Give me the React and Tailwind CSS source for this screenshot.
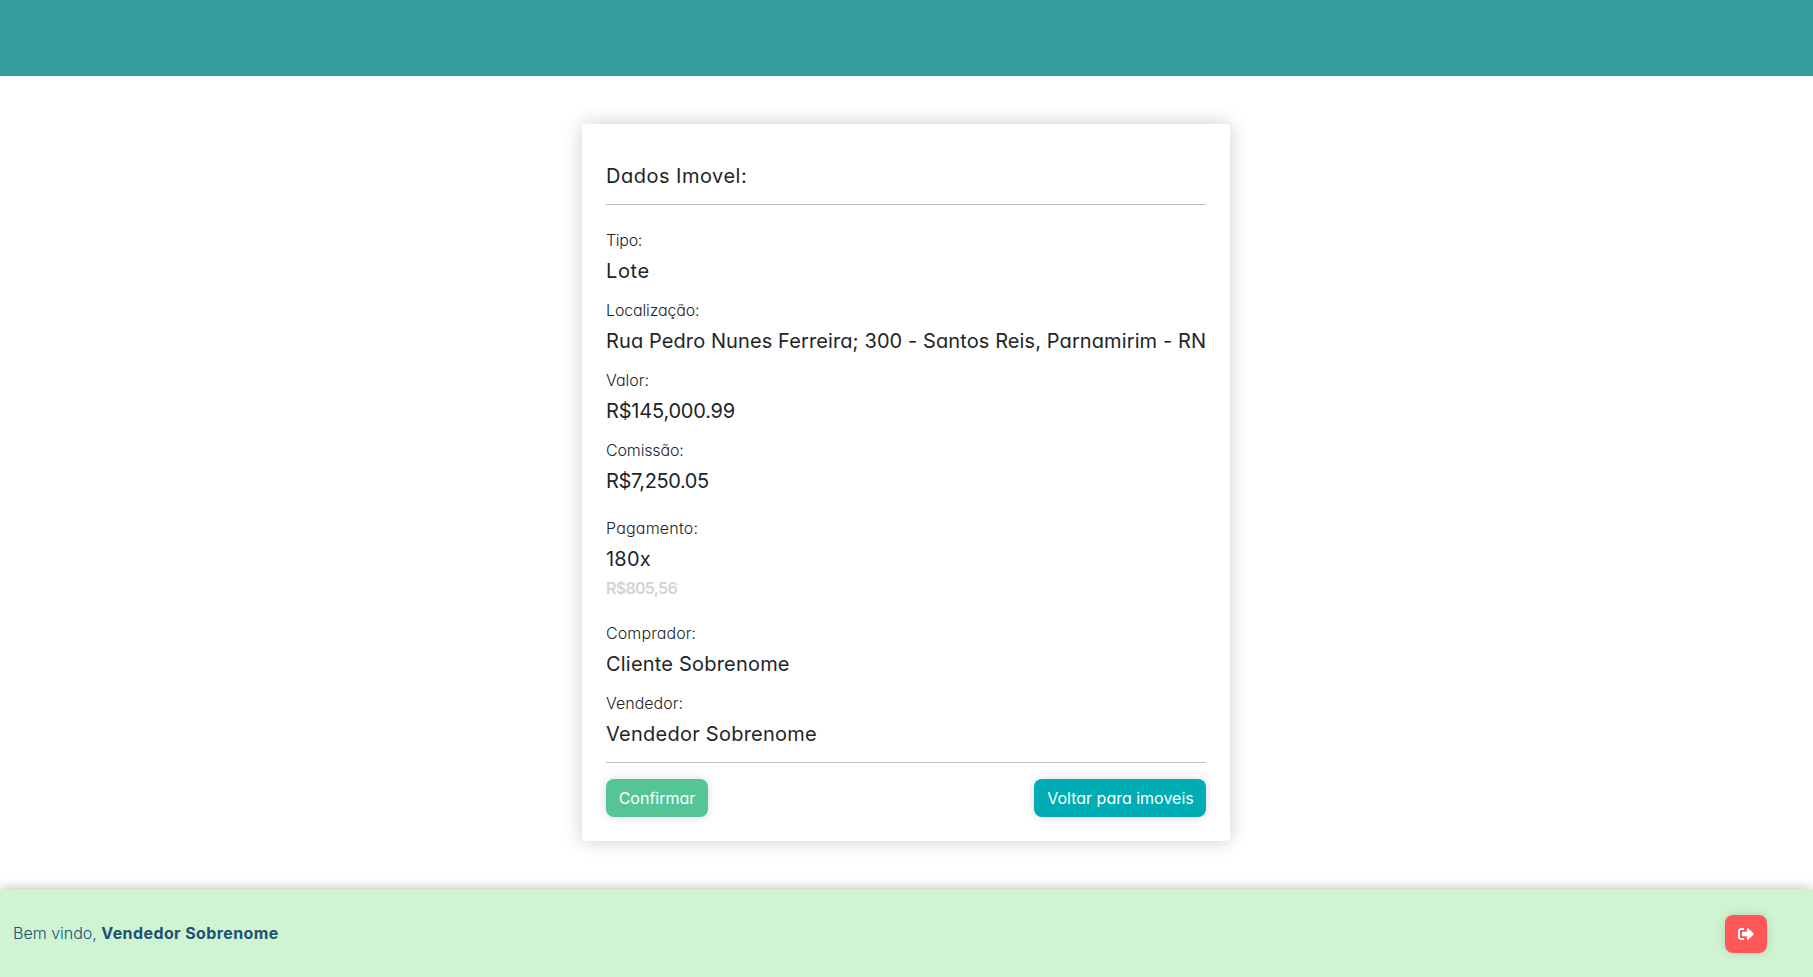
import { FaSignOutAlt } from 'react-icons/fa';

function Field({ label, value, labelClass = '', valueClass = '', className = 'mb-[15px]', children }) {
  return (
    <div className={className}>
      <p className={`text-base leading-6 font-light ${labelClass}`}>{label}</p>
      <h5 className={`mt-[7px] text-xl leading-6 whitespace-nowrap ${valueClass}`}>{value}</h5>
      {children}
    </div>
  );
}

const button =
  'flex h-[38px] items-center justify-center rounded-lg text-base leading-6 text-white shadow-[0_0_10px_rgba(0,0,0,0.15)]';

export default function App() {
  return (
    <div className="flex h-[977px] flex-col overflow-hidden bg-white font-[Inter,sans-serif] text-[#212529] [font-feature-settings:'cv11']">
      <header className="h-[76px] shrink-0 bg-[#339c9c]" />

      <main className="flex grow items-start justify-center pt-12 pr-px">
        <section className="h-[717px] w-[648px] rounded-[4px] bg-white px-6 shadow-[0_0_20px_rgba(0,0,0,0.2)]">
          <h5 className="pt-10 text-xl leading-6 tracking-[0.5px]">Dados Imovel:</h5>
          <hr className="mt-4 mb-[23px] border-t border-[#bfc0c1]" />

          <Field label="Tipo:" labelClass="tracking-[-0.3px]" value="Lote" valueClass="tracking-[0.6px]" />
          <Field
            label="Localização:"
            labelClass="tracking-[-0.15px]"
            value="Rua Pedro Nunes Ferreira; 300 - Santos Reis, Parnamirim - RN"
            valueClass="tracking-[0.1px]"
          />
          <Field label="Valor:" value="R$145,000.99" valueClass="tracking-[-0.2px]" />
          <Field
            label="Comissão:"
            labelClass="tracking-[-0.15px]"
            value="R$7,250.05"
            valueClass="tracking-[-0.4px]"
            className="mb-[23px]"
          />
          <Field
            label="Pagamento:"
            labelClass="tracking-[0.2px]"
            value="180x"
            valueClass="tracking-[0.2px]"
            className="mb-[21px]"
          >
            <p className="mt-[5px] text-base leading-6 font-semibold tracking-[-0.7px] text-[#d3d3d3]">R$805,56</p>
          </Field>
          <Field label="Comprador:" labelClass="tracking-[0.1px]" value="Cliente Sobrenome" valueClass="tracking-[0.2px]" />
          <Field label="Vendedor:" value="Vendedor Sobrenome" valueClass="tracking-[0.25px]" className="mb-4" />

          <hr className="mb-4 border-t border-[#bfc0c1]" />
          <div className="flex justify-between">
            <button className={`${button} w-[102px] bg-[#56c596]`}>Confirmar</button>
            <button className={`${button} w-[172px] bg-[#00adb5] pl-px`}>Voltar para imoveis</button>
          </div>
        </section>
      </main>

      <footer className="flex h-[88px] shrink-0 items-center justify-between bg-[#cff4d2] pt-0.5 pr-[46px] pl-[13px] text-[#205072] shadow-[0_-3px_10px_-2px_rgba(0,0,0,0.25)]">
        <p className="pb-0.5 text-base leading-6 font-light whitespace-nowrap">
          <span>Bem vindo, </span>
          <b className="font-bold tracking-[0.4px]">Vendedor Sobrenome</b>
        </p>
        <button className={`${button} w-[42px] bg-[#ff5757]`} aria-label="Sair">
          <FaSignOutAlt size={16} />
        </button>
      </footer>
    </div>
  );
}
